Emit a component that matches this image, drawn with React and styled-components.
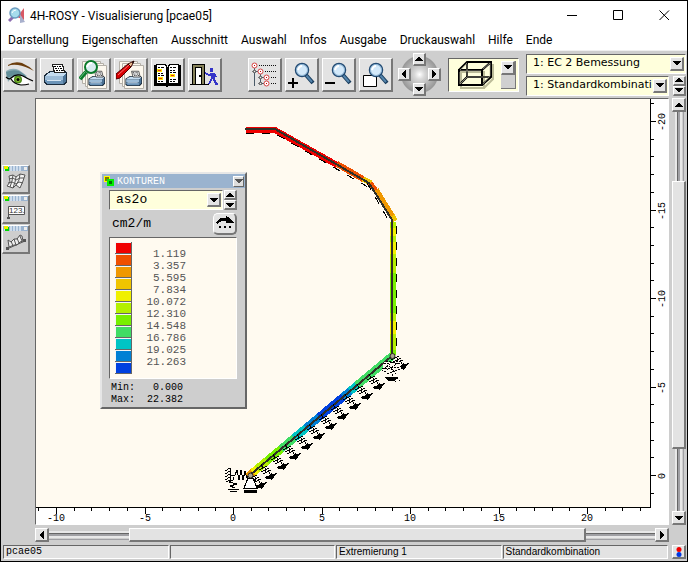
import React from "react";
import styled, { createGlobalStyle, css } from "styled-components";

const MENU = [
  "Darstellung",
  "Eigenschaften",
  "Ausschnitt",
  "Auswahl",
  "Infos",
  "Ausgabe",
  "Druckauswahl",
  "Hilfe",
  "Ende",
];

const COLORS = [
  "#f00000",
  "#f05000",
  "#f09800",
  "#f0c400",
  "#f0f000",
  "#b4f000",
  "#78f000",
  "#40dc64",
  "#00c4c4",
  "#0080d4",
  "#0040e0",
];

const LEVELS = [
  "1.119",
  "3.357",
  "5.595",
  "7.834",
  "10.072",
  "12.310",
  "14.548",
  "16.786",
  "19.025",
  "21.263",
];

const UNIT = 17.7;

const range = (from, to) =>
  Array.from({ length: to - from + 1 }, (_, i) => from + i);

/* ---------- icons ---------- */

const Arrow = ({ dir = "down", size = 8, color = "#000" }) => {
  const paths = {
    down: "M0 2H8V3H7V4H6V5H5V6H3V5H2V4H1V3H0Z",
    up: "M0 6H8V5H7V4H6V3H5V2H3V3H2V4H1V5H0Z",
    left: "M6 0V8H5V7H4V6H3V5H2V3H3V2H4V1H5V0Z",
    right: "M2 0V8H3V7H4V6H5V5H6V3H5V2H4V1H3V0Z",
  };
  return (
    <Glyph
      width={size}
      height={size}
      viewBox="0 0 8 8"
      shapeRendering="crispEdges"
    >
      <path d={paths[dir]} fill={color} />
    </Glyph>
  );
};

const Icon = ({ children, crisp }) => (
  <Glyph
    width="30"
    height="30"
    viewBox="0 0 30 30"
    shapeRendering={crisp ? "crispEdges" : "auto"}
  >
    {children}
  </Glyph>
);

const EyeIcon = () => (
  <Icon>
    <path d="M1 11Q7 7 14 10L22 16 15 15 7 17 3 22Z" fill="#8fb0b8" />
    <path d="M1 12Q8 9 14 11Q20 14 23 19Q15 13 7 16L2 18Z" fill="#628e98" />
    <path d="M3 5Q9 1 17 3Q24 6 29 11Q20 6 13 5Q7 4 3 6Z" fill="#6b3d0c" />
    <path d="M6 19Q11 15 17 16Q22 18 26 23Q18 26 11 23Z" fill="#fff" />
    <circle cx="13" cy="19.500" r="4" fill="#4b8a18" />
    <circle cx="13" cy="19.500" r="2.500" fill="#86bb30" />
    <circle cx="13" cy="19.500" r="1.500" fill="#000" />
    <path
      d="M1 17Q4 20 6 18Q11 13 18 16Q23 19 28 21M6 19Q9 24 16 25Q21 25 24 24"
      fill="none"
      stroke="#000"
      strokeWidth="1.200"
    />
  </Icon>
);

const Printer = () => (
  <g>
    <path d="M2 15L8 11H23L25 13V22L22 25H4L2 23Z" fill="#1c2c3c" />
    <path d="M5 14L9 12H23L24 14 21 16H3Z" fill="#c4dcf0" />
    <path d="M3 16H21V20H3Z" fill="#9cbcd8" />
    <path d="M21 16L24 14V21L21 24Z" fill="#4c7498" />
    <path d="M3 20H21V24H5L3 22Z" fill="#6c94b8" />
    <path d="M5 20.500H19" stroke="#d7e6f2" />
    <path d="M10.500 4.500H20.500L22.500 12.500H12.500Z" fill="#fff" stroke="#222" />
    <path
      d="M12 6.500H20M13 8.500H20M14 10.500H21"
      stroke="#000"
      strokeDasharray="2 1 1 1"
    />
  </g>
);

const PrinterIcon = () => (
  <Icon crisp>
    <Printer />
  </Icon>
);

const Sheets = () => (
  <g fill="#fdf8ee" stroke="#b4b0a8">
    <path d="M3.500 1.500H21.500V23.500H3.500Z" />
    <path d="M6.500 3.500H24.500V26.500H6.500Z" />
    <path d="M8.500 5.500H27.500V28.500H8.500Z" />
  </g>
);

const PreviewIcon = () => (
  <Icon>
    <Sheets />
    <g transform="translate(8 8) scale(.72)">
      <Printer />
    </g>
    <path d="M7 12L1 19" stroke="#0a7a2a" strokeWidth="4" />
    <path d="M6 12L1 18" stroke="#66c07c" strokeWidth="1" />
    <circle cx="12" cy="7" r="6" fill="#d8ecef" stroke="#0a7a2a" strokeWidth="2" />
    <path d="M8 7Q9 3 13 3" fill="none" stroke="#fff" strokeWidth="2" />
  </Icon>
);

const EditPrintIcon = () => (
  <Icon>
    <Sheets />
    <g transform="translate(8 8) scale(.72)">
      <Printer />
    </g>
    <path d="M0 14L12 4 15 7 4 18 0 19Z" fill="#d80000" stroke="#500000" />
    <path d="M2 15L13 5" stroke="#ff7070" />
    <path d="M12 4L18 1 15 7Z" fill="#f0c898" stroke="#400" />
    <path d="M16 2L18 1 17 4Z" fill="#000" />
  </Icon>
);

const BookIcon = () => (
  <Icon crisp>
    <path d="M1 5H12L14 7 16 5H28V26H16L14 27 12 26H1Z" fill="#000" />
    <path d="M3.500 4.500H12.500L13.500 6.500V24.500L11.500 23.500H3.500Z" fill="#fff" stroke="#000" />
    <path d="M25.500 4.500H16.500L15.500 6.500V24.500L17.500 23.500H25.500Z" fill="#fff" stroke="#000" />
    <path d="M4 10.500H9M5 18.500H10M17 15.500H22" stroke="#ffe600" strokeWidth="3" />
    <path d="M5 10.500H8M6 18.500H9M18 15.500H21" stroke="#e83020" />
    <path
      d="M5 7.500H11M5 13.500H10M5 15.500H11M5 21.500H10M17 7.500H23M17 10.500H22M17 12.500H23M17 19.500H23M17 21.500H22"
      stroke="#000"
      strokeDasharray="2 1 3 1"
    />
  </Icon>
);

const ExitIcon = () => (
  <Icon crisp>
    <path d="M2 4H15V25H2Z" fill="#000" />
    <path d="M3 5H14V25H3Z" fill="#86825a" />
    <path d="M5.500 7.500H11.500V24.500H5.500Z" fill="#fff" stroke="#000" />
    <path d="M9 15H11V17H9Z" fill="#000" />
    <path d="M0 24.500H5M12 24.500H19" stroke="#000" />
    <path d="M20 8H23V12H20Z" fill="#3434c8" />
    <path
      d="M15 13L19 15 22 14M22 18L19 24M23 18L25 21 26 24H28M24 13L26 17"
      fill="none"
      stroke="#3434c8"
      strokeWidth="2"
    />
    <path d="M20 13H25V19H21Z" fill="#3434c8" />
  </Icon>
);

const TreeIcon = () => (
  <Icon crisp>
    <path
      d="M4.500 7V26M10.500 13V25M5 11.500H8M11 17.500H14M11 23.500H14"
      stroke="#4a5a68"
      fill="none"
    />
    <path
      d="M9 5.500H27M15 11.500H27M21 17.500H27M21 23.500H27"
      stroke="#111"
      strokeDasharray="1 1"
    />
    {[[4, 5], [10, 11], [16, 17], [16, 23]].map(([x, y]) => (
      <g key={`${x}-${y}`} shapeRendering="auto">
        <circle cx={x + 0.5} cy={y + 0.5} r="2.500" fill="#fff" stroke="#d84444" />
        <path d={`M${x} ${y}h1v1h-1z`} fill="#c00" />
      </g>
    ))}
    {[[4, 11], [10, 17], [10, 23]].map(([x, y]) => (
      <circle key={`${x}-${y}`} cx={x + 0.5} cy={y + 0.5} r="1.500" fill="#eee" stroke="#777" />
    ))}
  </Icon>
);

const Lens = () => (
  <g>
    <path d="M19 15L26 23" stroke="#183c5c" strokeWidth="4" />
    <path d="M19 15L25 22" stroke="#5484ac" strokeWidth="2" />
    <circle cx="15" cy="10" r="6.500" fill="#d3e9fa" stroke="#244c74" strokeWidth="1.500" />
    <circle cx="15" cy="10" r="5.500" fill="none" stroke="#8cb4d4" />
    <path d="M11 10Q12 6 15 6" fill="none" stroke="#fff" strokeWidth="2" />
  </g>
);

const ZoomInIcon = () => (
  <Icon>
    <Lens />
    <path d="M1 23H11M6 18V28" stroke="#000" strokeWidth="2" />
  </Icon>
);

const ZoomOutIcon = () => (
  <Icon>
    <Lens />
    <path d="M1 23H11" stroke="#000" strokeWidth="2" />
  </Icon>
);

const ZoomBoxIcon = () => (
  <Icon>
    <path d="M2.500 15.500H15.500V26.500H2.500Z" fill="#fff" stroke="#000" />
    <Lens />
  </Icon>
);

const CubeIcon = () => (
  <Glyph width="40" height="30" viewBox="0 0 40 30">
    <path
      d="M4 12H27V28H4ZM27 28L36 19V4"
      fill="none"
      stroke="#bcbc98"
      strokeWidth="2"
    />
    <path
      d="M2 25L10 17H33M10 17V3M2 10L10 2H34V17L25 25M25 10L34 2M2 10H25V25H2Z"
      fill="none"
      stroke="#000"
      strokeWidth="2"
    />
    <path
      d="M3 24L10 17H32M10 16V4M3 10L10 3M33 3V16L26 24M26 9L33 3M3 11H24M3 12V24"
      fill="none"
      stroke="#b8b8a0"
      strokeWidth=".7"
    />
  </Glyph>
);

const AppIcon = () => (
  <Glyph width="18" height="17" viewBox="0 0 18 17">
    <path d="M16 1V13L9 10Z" fill="#d85864" />
    <path d="M12 7V16L17 15Z" fill="#a8b0cc" />
    <path d="M1 14L6 9" stroke="#8c6cb0" strokeWidth="3" />
    <circle cx="7" cy="6" r="5" fill="#a6dcec" stroke="#6c9cc0" strokeWidth="1.500" />
    <path d="M4 6Q5 3 8 3" fill="none" stroke="#fff" />
  </Glyph>
);

const MeshIcon = () => (
  <Glyph width="22" height="18" viewBox="0 0 22 18">
    <path
      d="M4 3L8 2 11 4 15 1 20 2 18 8 15 15 11 12 8 15 2 13 5 9Z"
      fill="#f4f4f4"
      stroke="#555"
    />
    <path
      d="M8 2L7 8 5 14M11 4L10 9 8 15M15 1L14 7 11 12M4 6L8 5 11 7 15 5 19 5M3 10L7 9 11 11 14 9 18 10"
      stroke="#555"
      fill="none"
    />
  </Glyph>
);

const NumberIcon = () => (
  <Glyph width="22" height="18" viewBox="0 0 22 18">
    <path d="M3.500 16V3.500H19.500V11.500H4" fill="#fff" stroke="#555" />
    <NumberText x="4" y="10">
      123.
    </NumberText>
    <path d="M2 14H5V16H2Z" fill="#555" />
  </Glyph>
);

const BeamIcon = () => (
  <Glyph width="22" height="18" viewBox="0 0 22 18">
    <path
      d="M3 7L6 9 9 6 12 6 15 2 17 3 18 8 15 9 12 12 9 12 4 14Z"
      fill="#eee"
      stroke="#555"
    />
    <path d="M2 16L20 8M6 8L8 13M9 6L11 12M12 5L14 10M15 3L17 8" stroke="#555" />
    <path d="M1 14H4V17H1ZM18 6H21V9H18Z" fill="#555" />
  </Glyph>
);

/* ---------- drawing ---------- */

const columnBands = [
  [222, 228, 5],
  [228, 236, 4],
  [236, 242, 5],
  [242, 254, 4],
  [254, 273, 5],
  [273, 313, 6],
  [313, 321, 5],
  [321, 334, 4],
  [334, 350, 5],
  [350, 355, 6],
];

const rampBands = [
  [392, 357, 7],
  [357, 350, 8],
  [350, 343, 9],
  [343, 319, 10],
  [319, 306, 9],
  [306, 294, 8],
  [294, 281, 7],
  [281, 267, 6],
  [267, 257, 5],
  [257, 253, 4],
  [253, 248, 2],
];

const rampY = (x) => 356 + ((392 - x) * 119) / 142;

const Spring = ({ x, y }) => (
  <g transform={`translate(${x} ${y})`}>
    <path
      d="M-9-12L-7-8M-11-6L-3-10M-9-4L-1-8M-7-2L1-6M-5-8L-4-3M-2-6L0-2"
      fill="none"
      stroke="#000"
      strokeDasharray="4 1"
    />
    <path d="M-6 2L-4 0-2 0 2-4 2-2 7-3 4 1 2 4 0 3-3 3Z" fill="#000" />
  </g>
);

const Structure = () => (
  <g transform="translate(-36 -99)" shapeRendering="crispEdges">
    <path d="M246 130H276" stroke={COLORS[0]} strokeWidth="6" />
    <path d="M275 130L337 165" stroke={COLORS[0]} strokeWidth="6" />
    <path d="M337 164L363 179" stroke={COLORS[1]} strokeWidth="6" />
    <path d="M363 179L371 183" stroke={COLORS[3]} strokeWidth="5" />
    <path d="M370 183L376 191" stroke={COLORS[1]} strokeWidth="5" />
    <path d="M376 190L393 218" stroke={COLORS[2]} strokeWidth="6" />
    <path d="M392 216L395 221" stroke={COLORS[3]} strokeWidth="6" />
    {columnBands.map(([from, to, c]) => (
      <path key={from} d={`M393 ${from}V${to}`} stroke={COLORS[c]} strokeWidth="6" />
    ))}
    {rampBands.map(([from, to, c]) => (
      <path
        key={from}
        d={`M${from} ${rampY(from)}L${to} ${rampY(to)}`}
        stroke={COLORS[c]}
        strokeWidth="8"
      />
    ))}
    <path
      d="M246 133.500H275L367 186.500M367 183L389 221M396.500 226V350"
      fill="none"
      stroke="#000"
      strokeDasharray="8 8"
    />
    <path
      d="M245 129H275L369 183 392 220V356L250 475"
      fill="none"
      stroke="#303028"
      strokeWidth="2"
    />

    {range(0, 9).map((i) => (
      <Spring key={i} x={378 - i * 12} y={386 + i * 10} />
    ))}
    <Spring x={402} y={366} />
    <Spring x={260} y={485} />

    <path d="M384 362H399L401 369 394 375H388L382 370Z" fill="#fffaf0" />
    <path
      d="M386 361L400 364M384 364L401 361M382 369L400 367M384 372L398 363M387 374L401 369M389 366L396 374M382 371L391 363M392 374V377"
      stroke="#000"
      strokeDasharray="2 1"
    />
    <path d="M385 377H398L394 381H388Z" fill="#000" />
    <path d="M396 377L400 381M392 378L396 382" stroke="#000" strokeDasharray="1 1" />

    <path
      d="M225 471L230 468M225 474L230 471M225 477L230 474M225 480L230 477M226 482L230 480"
      stroke="#000"
    />
    <path
      d="M230.500 468V482M231 475H235L237 470 239 480 241 470 243 480 245 471 247 478 249 475"
      fill="none"
      stroke="#000"
    />
    <path
      d="M233 477V480L229 482 237 484 230 486 235 488M228 489.500H239M230 491.500H237"
      fill="none"
      stroke="#000"
    />
    <path d="M248 478L244 488H257L253 478Z" fill="#fff" stroke="#000" />
    <path d="M244 490H257V493H244Z" fill="#000" />
    <g shapeRendering="auto" fill="#aaa690" stroke="#282820">
      <circle cx="250.500" cy="475.500" r="2.500" />
      <circle cx="392.500" cy="356" r="2.500" />
    </g>
  </g>
);

const BottomRuler = () => (
  <RulerBottom>
    <path
      d={range(-11, 23)
        .map((v) => `M${Math.round(197 + v * UNIT) + 0.5} 0V${v % 5 ? 3 : 6}`)
        .join("")}
      stroke="#000"
      shapeRendering="crispEdges"
    />
    {[-10, -5, 0, 5, 10, 15, 20].map((v) => (
      <RulerText key={v} x={Math.round(197 + v * UNIT)} y="13">
        {v}
      </RulerText>
    ))}
  </RulerBottom>
);

const RightRuler = () => (
  <RulerRight>
    <path
      d={range(-21, 1)
        .map((v) => `M0 ${Math.round(376 + v * UNIT) + 0.5}H${v % 5 ? 3 : 5}`)
        .join("")}
      stroke="#000"
      shapeRendering="crispEdges"
    />
    {[-20, -15, -10, -5, 0].map((v) => (
      <RulerText
        key={v}
        transform={`translate(14 ${Math.round(377 + v * UNIT)}) rotate(-90)`}
      >
        {v}
      </RulerText>
    ))}
  </RulerRight>
);

/* ---------- controls ---------- */

const ComboBox = ({ label, value, mono }) => (
  <Combo>
    <Select aria-label={label} defaultValue={value} $mono={mono}>
      <option>{value}</option>
    </Select>
    <ComboArrow>
      <Arrow size={8} />
    </ComboArrow>
  </Combo>
);

const Spinner = ({ label }) => (
  <SpinnerBox>
    <SmallButton aria-label={`${label} zurück`}>
      <Arrow dir="up" size={8} />
    </SmallButton>
    <SmallButton aria-label={`${label} vor`}>
      <Arrow size={8} />
    </SmallButton>
  </SpinnerBox>
);

const Konturen = () => (
  <Panel>
    <PanelTitle>
      <Glyph width="10" height="10" viewBox="0 0 10 10" shapeRendering="crispEdges">
        <path d="M0 0H6V6H0Z" fill="#ffff00" />
        <path d="M1 1H5V5H1Z" fill="#807800" />
        <path d="M3 3H10V10H3Z" fill="#00f000" />
        <path d="M5 5H8V8H5Z" fill="#007000" />
      </Glyph>
      <PanelName>KONTUREN</PanelName>
      <PanelClose aria-label="Menü">
        <Arrow size={8} color="#555" />
      </PanelClose>
    </PanelTitle>
    <PanelBody>
      <PanelRow>
        <ComboBox label="Ergebnis" value="as2o" mono />
        <Spinner label="Ergebnis" />
      </PanelRow>
      <UnitRow>
        <span>cm2/m</span>
        <RoundButton aria-label="Weiter">
          <Glyph width="18" height="14" viewBox="0 0 18 14" shapeRendering="crispEdges">
            <path d="M0 6L2 4 5 2H10V0L12 1 18 6V7H10V5H6L3 6 1 8Z" fill="#000" />
            <path d="M3 10H5V12H3ZM8 10H10V12H8ZM13 10H15V12H13Z" fill="#000" />
          </Glyph>
        </RoundButton>
      </UnitRow>
      <Legend>
        <div>
          {COLORS.map((c) => (
            <Swatch key={c} $color={c} />
          ))}
        </div>
        <LevelList>
          {LEVELS.map((l) => (
            <li key={l}>{l}</li>
          ))}
        </LevelList>
      </Legend>
      <Extremes>
        <dt>Min:</dt>
        <dd>0.000</dd>
        <dt>Max:</dt>
        <dd>22.382</dd>
      </Extremes>
    </PanelBody>
  </Panel>
);

const tools = [
  ["Darstellung", EyeIcon],
  ["Drucken", PrinterIcon],
  ["Druckvorschau", PreviewIcon],
  ["Druckliste", EditPrintIcon],
  ["Handbuch", BookIcon],
  ["Ende", ExitIcon],
];

const viewTools = [
  ["Auswahl", TreeIcon],
  ["Vergrößern", ZoomInIcon],
  ["Verkleinern", ZoomOutIcon],
  ["Ausschnitt", ZoomBoxIcon],
];

const sideTools = [
  ["Netz", MeshIcon],
  ["Zahlen", NumberIcon],
  ["Stäbe", BeamIcon],
];

const ToolGroup = ({ items }) => (
  <Tools>
    {items.map(([label, Drawing]) => (
      <ToolButton key={label} aria-label={label}>
        <Drawing />
      </ToolButton>
    ))}
  </Tools>
);

const App = () => (
  <Window>
    <GlobalStyle />
    <TitleBar>
      <AppIcon />
      <Title>4H-ROSY - Visualisierung [pcae05]</Title>
      <WindowButton aria-label="Minimieren">
        <Glyph width="11" height="11" viewBox="0 0 11 11">
          <path d="M0 5.500H10" stroke="#000" />
        </Glyph>
      </WindowButton>
      <WindowButton aria-label="Maximieren">
        <Glyph width="11" height="11" viewBox="0 0 11 11">
          <path d="M.5.5H9.500V9.500H.5Z" fill="none" stroke="#000" />
        </Glyph>
      </WindowButton>
      <WindowButton aria-label="Schließen">
        <Glyph width="11" height="11" viewBox="0 0 11 11">
          <path d="M.5.5L10 10M10 .5L.5 10" stroke="#000" />
        </Glyph>
      </WindowButton>
    </TitleBar>
    <MenuBar>
      {MENU.map((item) => (
        <MenuItem key={item}>{item}</MenuItem>
      ))}
    </MenuBar>

    <Toolbar>
      <ToolGroup items={tools} />
      <ViewControls>
        <ToolGroup items={viewTools} />
        <Pan>
          {["up", "left", "right", "down"].map((dir) => (
            <PanButton key={dir} $dir={dir} aria-label={dir}>
              <Arrow dir={dir} size={8} />
            </PanButton>
          ))}
        </Pan>
        <ViewPicker aria-label="Ansicht">
          <CubeIcon />
          <PickerSide>
            <PickerArrow>
              <Arrow size={8} />
            </PickerArrow>
          </PickerSide>
        </ViewPicker>
      </ViewControls>
      <Combos>
        <ComboBox label="Nachweis" value="1: EC 2 Bemessung" />
        <ComboRow>
          <ComboBox label="Lastfall" value="1: Standardkombination" />
          <Spinner label="Lastfall" />
        </ComboRow>
      </Combos>
    </Toolbar>

    <Workspace>
      <Sidebar>
        {sideTools.map(([label, Drawing]) => (
          <SideButton key={label} aria-label={label}>
            <SideHead />
            <Drawing />
          </SideButton>
        ))}
      </Sidebar>
      <Frame>
        <Canvas>
          <Plot>
            <Structure />
          </Plot>
          <Konturen />
        </Canvas>
        <RightRuler />
        <BottomRuler />
      </Frame>
      <ScrollV>
        <ScrollButton aria-label="nach oben">
          <Arrow dir="up" />
        </ScrollButton>
        <Track $vertical $grow={69} />
        <Thumb $grow={267} />
        <Track $vertical $grow={62} />
        <ScrollButton aria-label="nach unten">
          <Arrow />
        </ScrollButton>
      </ScrollV>
      <ScrollH>
        <ScrollButton aria-label="nach links">
          <Arrow dir="left" />
        </ScrollButton>
        <Track $grow={80} />
        <Thumb $grow={457} />
        <Track $grow={69} />
        <ScrollButton aria-label="nach rechts">
          <Arrow dir="right" />
        </ScrollButton>
      </ScrollH>
    </Workspace>

    <StatusBar>
      <StatusCells>
        <StatusCell $mono>pcae05</StatusCell>
        <StatusCell />
        <StatusCell>Extremierung 1</StatusCell>
        <StatusCell>Standardkombination</StatusCell>
      </StatusCells>
      <ScrollButton aria-label="Status">
        <Glyph width="6" height="10" viewBox="0 0 6 10">
          <circle cx="3" cy="7.500" r="2.500" fill="#0038e0" />
          <circle cx="3" cy="2.500" r="2.500" fill="#f00000" />
        </Glyph>
      </ScrollButton>
    </StatusBar>
  </Window>
);

/* ---------- styles ---------- */

const GlobalStyle = createGlobalStyle`
  * {
    box-sizing: border-box;
  }
  body {
    margin: 0;
    font-family: Roboto, "Open Sans", sans-serif;
    font-size: 12px;
    color: #000;
  }
  button {
    margin: 0;
    padding: 0;
    font: inherit;
    color: inherit;
  }
`;

const raised = css`
  background: #e3e3e3;
  border: solid;
  border-width: 1px 2px 2px 1px;
  border-color: #fff #777 #777 #fff;
`;

const sunken = css`
  border: 1px solid;
  border-color: #666 #fff #fff #666;
`;

const mono = css`
  font-family: "Liberation Mono", monospace;
`;

const Glyph = styled.svg`
  display: block;
  flex: none;
`;

const Window = styled.div`
  min-height: 100vh;
  display: flex;
  flex-direction: column;
  background: #cecece;
  border: 1px solid #000;
`;

const TitleBar = styled.header`
  height: 29px;
  display: flex;
  align-items: center;
  background: #fff;
  padding-left: 7px;
`;

const Title = styled.h1`
  flex: 1;
  margin: 0 0 0 4px;
  font-size: 12px;
  font-weight: 400;
`;

const WindowButton = styled.button`
  width: 46px;
  height: 29px;
  display: flex;
  align-items: center;
  justify-content: center;
  background: none;
  border: none;
`;

const MenuBar = styled.nav`
  height: 20px;
  display: flex;
  align-items: center;
  gap: 13px;
  padding-left: 7px;
  background: #fff;
`;

const MenuItem = styled.button`
  border: none;
  background: none;
  line-height: 20px;
`;

const Toolbar = styled.div`
  height: 48px;
  display: flex;
  align-items: center;
  border-top: 1px solid #efefef;
  padding: 0 1px 0 2px;
`;

const Tools = styled.div`
  display: flex;
  gap: 3px;
`;

const ToolButton = styled.button`
  ${raised}
  width: 34px;
  height: 34px;
  padding: 1px;
  overflow: hidden;
`;

const ViewControls = styled.div`
  display: flex;
  align-items: center;
  margin-left: 26px;
`;

const Pan = styled.div`
  display: grid;
  grid-template-columns: 13px 13px 13px;
  grid-template-rows: 13px 13px 13px;
  grid-template-areas: ". up ." "left . right" ". down .";
  gap: 2px;
  margin: 0 7px 0 5px;
  background: radial-gradient(
    circle,
    #fff 0,
    #d8d8d8 5px,
    #989898 18px,
    transparent 19px
  );
`;

const PanButton = styled.button`
  ${raised}
  grid-area: ${(props) => props.$dir};
  display: flex;
  align-items: center;
  justify-content: center;
`;

const ViewPicker = styled.button`
  ${sunken}
  width: 71px;
  height: 34px;
  display: flex;
  align-items: center;
  justify-content: space-between;
  padding: 0 2px 0 8px;
  background: #ffffdc;
`;

const PickerSide = styled.span`
  width: 15px;
  height: 28px;
  background: #d0d0d0;
  border-right: 1px solid #777;
  border-bottom: 1px solid #777;
`;

const PickerArrow = styled.span`
  ${raised}
  height: 14px;
  display: flex;
  align-items: center;
  justify-content: center;
`;

const Combos = styled.div`
  flex: 1;
  min-width: 0;
  margin-left: 7px;
  display: flex;
  flex-direction: column;
  gap: 2px;
`;

const ComboRow = styled.div`
  display: flex;
  gap: 4px;
`;

const Combo = styled.div`
  ${sunken}
  flex: 1;
  min-width: 0;
  min-height: 20px;
  display: grid;
  grid-template-columns: minmax(0, 1fr) 14px;
  align-items: center;
  padding-right: 1px;
  background: #ffffdc;
`;

const Select = styled.select`
  grid-area: 1 / 1 / 2 / 3;
  width: 100%;
  height: 18px;
  margin: 0;
  padding: 0 15px 2px 6px;
  appearance: none;
  border: none;
  background: none;
  color: #000;
  font-family: "DejaVu Sans", sans-serif;
  font-size: 11px;
  ${(props) =>
    props.$mono &&
    css`
      ${mono}
      font-size: 13px;
    `}
`;

const ComboArrow = styled.span`
  ${raised}
  grid-area: 1 / 2;
  height: 14px;
  display: flex;
  align-items: center;
  justify-content: center;
  pointer-events: none;
`;

const SpinnerBox = styled.div`
  width: 13px;
  display: flex;
  flex-direction: column;
`;

const SmallButton = styled.button`
  ${raised}
  height: 10px;
  display: flex;
  align-items: center;
  justify-content: center;
`;

const Workspace = styled.main`
  flex: 1;
  display: grid;
  grid-template-columns: 31px minmax(0, 1fr) 14px;
  grid-template-rows: minmax(426px, 1fr) 14px;
  gap: 3px;
  padding-right: 1px;
`;

const Sidebar = styled.div`
  display: flex;
  flex-direction: column;
  gap: 1px;
  padding: 67px 1px 0 1px;
`;

const SideButton = styled.button`
  ${raised}
  background: #cecece;
  width: 28px;
  height: 29px;
  display: flex;
  flex-direction: column;
  align-items: center;
  gap: 2px;
`;

const SideHead = styled.span`
  align-self: stretch;
  height: 5px;
  background:
    linear-gradient(#f0f000, #f0f000) 1px 0 / 4px 3px no-repeat,
    linear-gradient(#00d800, #00d800) 2px 1px / 4px 4px no-repeat,
    linear-gradient(#eee, #eee) 21px 1px / 3px 3px no-repeat,
    linear-gradient(#9ab3cf, #9ab3cf) 18px 0 / 7px 5px no-repeat,
    repeating-linear-gradient(90deg, #9ab3cf 0 1px, #cddcec 1px 3px);
`;

const NumberText = styled.text`
  font-family: "Liberation Sans", sans-serif;
  font-size: 8px;
  fill: #333;
`;

const Frame = styled.section`
  ${sunken}
  display: grid;
  grid-template-columns: minmax(0, 1fr) 17px;
  grid-template-rows: minmax(0, 1fr) 16px;
  background: #fff;
`;

const Canvas = styled.div`
  position: relative;
  display: grid;
  background: #fffaf0;
  border-right: 1px solid #000;
  border-bottom: 1px solid #000;
`;

const Plot = styled.svg`
  display: block;
  width: 100%;
  height: 100%;
`;

const RulerRight = styled.svg`
  display: block;
  width: 17px;
  height: 100%;
`;

const RulerBottom = styled.svg`
  display: block;
  width: 100%;
  height: 16px;
`;

const RulerText = styled.text`
  ${mono}
  font-size: 10px;
  text-anchor: middle;
`;

const Panel = styled.aside`
  position: absolute;
  left: 64px;
  top: 73px;
  width: 147px;
  background: #cecece;
  border: solid;
  border-width: 2px;
  border-color: #e6e6e6 #666 #666 #e6e6e6;
`;

const PanelTitle = styled.div`
  height: 14px;
  display: flex;
  align-items: center;
  gap: 3px;
  padding: 0 1px 0 2px;
  background: #9ab3cf;
  color: #fff;
`;

const PanelName = styled.span`
  ${mono}
  flex: 1;
  font-size: 10px;
`;

const PanelClose = styled.button`
  width: 11px;
  height: 11px;
  display: flex;
  align-items: center;
  justify-content: center;
  background: #ddd;
  border: 1px solid;
  border-color: #fff #666 #666 #fff;
`;

const PanelBody = styled.div`
  padding: 2px 8px 1px 7px;
`;

const PanelRow = styled.div`
  display: flex;
  gap: 1px;
`;

const UnitRow = styled.div`
  ${mono}
  height: 27px;
  display: flex;
  align-items: center;
  justify-content: space-between;
  padding-left: 3px;
  font-size: 13px;
`;

const RoundButton = styled.button`
  ${raised}
  width: 24px;
  height: 22px;
  border-radius: 5px;
  display: flex;
  align-items: center;
  justify-content: center;
`;

const Legend = styled.div`
  ${sunken}
  height: 142px;
  display: flex;
  gap: 4px;
  padding: 4px 5px;
  background: #fffaf0;
`;

const Swatch = styled.div`
  width: 17px;
  height: 12px;
  background: ${(props) => props.$color};
  border: solid #666;
  border-width: 0 1px 1px 0;
  box-shadow: inset 1px 1px #f4f4f4;
`;

const LevelList = styled.ol`
  ${mono}
  width: 50px;
  margin: 0;
  padding: 6px 0 0;
  list-style: none;
  text-align: right;
  font-size: 11px;
  line-height: 12px;
  color: #555;
`;

const Extremes = styled.dl`
  ${mono}
  display: grid;
  grid-template-columns: 30px 42px;
  margin: 0;
  padding: 3px 0 0 2px;
  font-size: 10px;
  line-height: 12px;

  dd {
    margin: 0;
    text-align: right;
  }
`;

const ScrollV = styled.div`
  display: flex;
  flex-direction: column;
`;

const ScrollH = styled.div`
  grid-column: 2;
  display: flex;
`;

const ScrollButton = styled.button`
  ${raised}
  flex: none;
  width: 14px;
  height: 14px;
  display: flex;
  align-items: center;
  justify-content: center;
`;

const Track = styled.div`
  flex: ${(props) => props.$grow} 1 0;
  background: linear-gradient(
    ${(props) => (props.$vertical ? "90deg" : "180deg")},
    #cecece 3px,
    #e8e8e8 3px 5px,
    #666 5px 6px,
    #a0a0a4 6px 8px,
    #e8e8e8 8px 10px,
    #cecece 10px 11px,
    #a0a0a4 11px 12px,
    #cecece 12px
  );
`;

const Thumb = styled.div`
  ${raised}
  flex: ${(props) => props.$grow} 1 0;
`;

const StatusBar = styled.footer`
  display: flex;
  gap: 4px;
  padding: 3px 1px 2px 2px;
`;

const StatusCells = styled.div`
  flex: 1;
  display: grid;
  grid-template-columns: repeat(4, minmax(0, 1fr));
  gap: 1px;
`;

const StatusCell = styled.div`
  ${sunken}
  height: 14px;
  padding-left: 2px;
  background: #e3e3e3;
  font-family: "Liberation Sans", sans-serif;
  font-size: 10px;
  line-height: 12px;
  ${(props) => props.$mono && mono}
`;

export default App;
